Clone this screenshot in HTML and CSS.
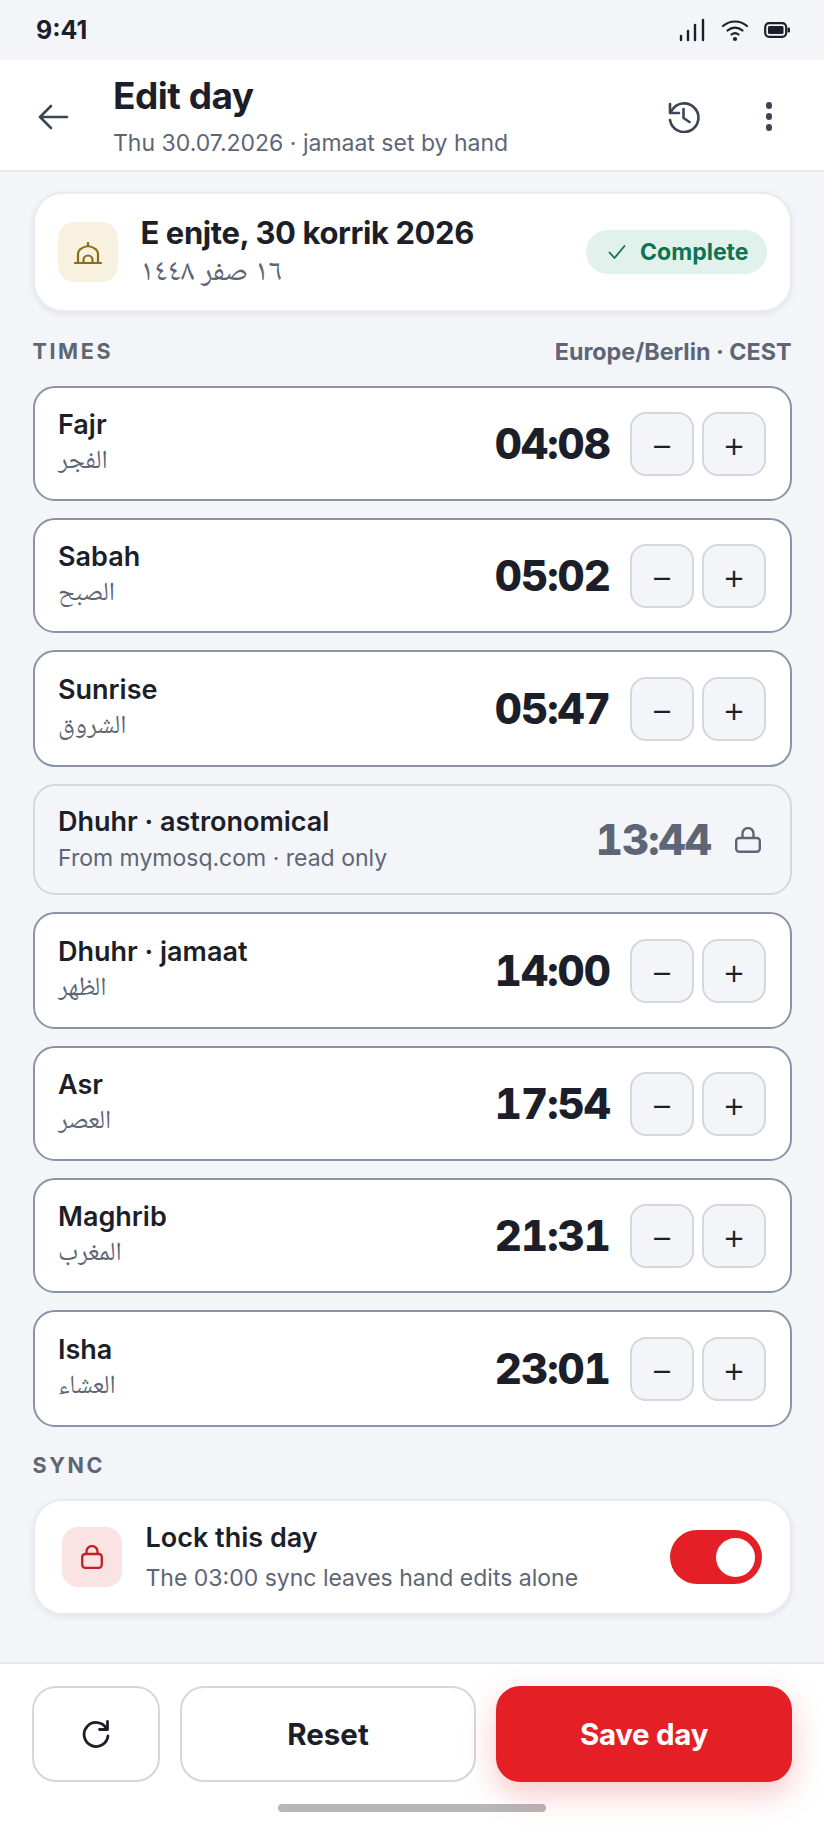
FILE: index.html
```html
<!DOCTYPE html>
<html lang="en">
<head>
    <meta charset="UTF-8">
    <meta name="viewport" content="width=device-width, initial-scale=1.0">
    <title>Edit day</title>
    <link rel="stylesheet" href="styles.css">
</head>
<body>
    <div class="screen">
        <div class="status-bar">
            <span class="status-time">9:41</span>
            <div class="status-icons">
                <svg width="27" height="24" viewBox="0 0 27 24"><path d="M2 22v-4M9 22v-9M16 22V7M24 22V2" fill="none" stroke="#1c1f2a" stroke-width="2.4" stroke-linecap="round"/></svg>
                <svg width="28" height="24" viewBox="0 0 28 24" fill="none" stroke="#1c1f2a" stroke-width="2.2" stroke-linecap="round"><path d="M2 8c7-6 17-6 24 0"/><path d="M6.5 12.5c4.500-3.800 10.500-3.800 15 0"/><path d="M10.500 16.500c2-1.600 5-1.600 7 0"/><circle cx="14" cy="21" r="1" fill="#1c1f2a"/></svg>
                <svg width="26" height="16" viewBox="0 0 26 16"><rect x="1.200" y="1.200" width="21" height="13.600" rx="4" fill="none" stroke="#1c1f2a" stroke-width="2.200"/><rect x="4" y="4" width="15.500" height="8" rx="1.500" fill="#1c1f2a"/><rect x="23.500" y="5.500" width="2.500" height="5" rx="1.200" fill="#1c1f2a"/></svg>
            </div>
        </div>

        <header class="topbar">
            <svg class="back-icon" width="32" height="26" viewBox="0 0 32 26" fill="none" stroke="#3d4453" stroke-width="2.600" stroke-linecap="round" stroke-linejoin="round"><path d="M30 13H3M14 2 3 13l11 11"/></svg>
            <div class="topbar-text">
                <h1>Edit day</h1>
                <p>Thu 30.07.2026 · jamaat set by hand</p>
            </div>
            <svg class="history-icon" width="33" height="33" viewBox="0 0 33 33" fill="none" stroke="#3d4453" stroke-width="2.600" stroke-linecap="round" stroke-linejoin="round"><path d="M2 4v9h9"/><path d="M3.500 11A14.300 14.300 0 1 1 2 20"/><path d="M15.500 9v9l6 4"/></svg>
            <div class="kebab"><i></i><i></i><i></i></div>
        </header>

        <main class="content">
            <section class="card date-card">
                <div class="icon-box icon-gold">
                    <svg width="28" height="22" viewBox="0 0 28 22" fill="none" stroke="#8a6d1c" stroke-width="2.200" stroke-linecap="round"><path d="M1 21h26"/><path d="M4 21v-9C4 7.500 9 5 14 4c5 1 10 3.500 10 8v9"/><path d="M9.500 21v-3a4.500 4.500 0 0 1 9 0v3"/><path d="M14 4V1"/></svg>
                </div>
                <div class="date-text">
                    <div class="date-title">E enjte, 30 korrik 2026</div>
                    <div class="date-hijri" dir="rtl">١٦ صفر ١٤٤٨</div>
                </div>
                <div class="badge">
                    <svg width="18" height="14" viewBox="0 0 18 14" fill="none" stroke="#0f7350" stroke-width="1.800" stroke-linecap="round" stroke-linejoin="round"><path d="M1.500 7.500 6.500 13 16.500 1"/></svg>
                    Complete
                </div>
            </section>

            <div class="section-head">
                <span class="section-label">TIMES</span>
                <span class="section-note">Europe/Berlin · CEST</span>
            </div>

            <div class="rows">
                <div class="row"><div class="row-text"><div class="row-name">Fajr</div><div class="row-ar" dir="rtl">الفجر</div></div><div class="row-time">04:08</div><button class="step">−</button><button class="step">+</button></div>
                <div class="row"><div class="row-text"><div class="row-name">Sabah</div><div class="row-ar" dir="rtl">الصبح</div></div><div class="row-time">05:02</div><button class="step">−</button><button class="step">+</button></div>
                <div class="row row-tall"><div class="row-text"><div class="row-name">Sunrise</div><div class="row-ar" dir="rtl">الشروق</div></div><div class="row-time">05:47</div><button class="step">−</button><button class="step">+</button></div>
                <div class="row row-locked">
                    <div class="row-text"><div class="row-name">Dhuhr · astronomical</div><div class="row-sub">From mymosq.com · read only</div></div>
                    <div class="row-time">13:44</div>
                    <svg class="row-lock" width="26" height="26" viewBox="0 0 26 26" fill="none" stroke="#5e6676" stroke-width="2.400" stroke-linejoin="round"><rect x="1.200" y="11" width="23.600" height="13.800" rx="3"/><path d="M7.500 11V6.500a5.500 5.500 0 0 1 11 0V11"/></svg>
                </div>
                <div class="row row-tall"><div class="row-text"><div class="row-name">Dhuhr · jamaat</div><div class="row-ar" dir="rtl">الظهر</div></div><div class="row-time">14:00</div><button class="step">−</button><button class="step">+</button></div>
                <div class="row"><div class="row-text"><div class="row-name">Asr</div><div class="row-ar" dir="rtl">العصر</div></div><div class="row-time">17:54</div><button class="step">−</button><button class="step">+</button></div>
                <div class="row"><div class="row-text"><div class="row-name">Maghrib</div><div class="row-ar" dir="rtl">المغرب</div></div><div class="row-time">21:31</div><button class="step">−</button><button class="step">+</button></div>
                <div class="row row-tall"><div class="row-text"><div class="row-name">Isha</div><div class="row-ar" dir="rtl">العشاء</div></div><div class="row-time">23:01</div><button class="step">−</button><button class="step">+</button></div>
            </div>

            <div class="section-head section-head-sync">
                <span class="section-label">SYNC</span>
            </div>

            <section class="card sync-card">
                <div class="icon-box icon-red">
                    <svg width="22" height="24" viewBox="0 0 22 24" fill="none" stroke="#c21f26" stroke-width="2.300" stroke-linejoin="round"><rect x="1.200" y="9" width="19.600" height="13.800" rx="3"/><path d="M5.500 9V6.500a5.500 5.500 0 0 1 11 0V9"/></svg>
                </div>
                <div class="sync-text">
                    <div class="sync-title">Lock this day</div>
                    <div class="sync-sub">The 03:00 sync leaves hand edits alone</div>
                </div>
                <div class="toggle"><span class="knob"></span></div>
            </section>
        </main>

        <footer class="actions">
            <div class="action-row">
                <button class="btn btn-icon">
                    <svg width="30" height="30" viewBox="0 0 30 30" fill="none" stroke="#1c1f2a" stroke-width="2.800" stroke-linecap="round" stroke-linejoin="round"><path d="M25.500 9.500A12 12 0 1 0 27 17"/><path d="M26.500 2.500v8h-8"/></svg>
                </button>
                <button class="btn btn-reset">Reset</button>
                <button class="btn btn-save">Save day</button>
            </div>
            <div class="home-bar"></div>
        </footer>
    </div>
</body>
</html>
```

FILE: styles.css
```css
* {
    box-sizing: border-box;
}
html, body {
    margin: 0;
    padding: 0;
}
body {
    font-family: Inter, sans-serif;
    background-color: #f3f5f9;
    color: #1c1f2a;
}
.screen {
    width: 824px;
    height: 1830px;
    display: flex;
    flex-direction: column;
    overflow: hidden;
}
.status-bar {
    height: 60px;
    padding: 0 34px 0 36px;
    display: flex;
    align-items: center;
    justify-content: space-between;
}
.status-time {
    font-size: 25px;
    font-weight: 700;
}
.status-icons {
    display: flex;
    align-items: center;
    gap: 15px;
}
.topbar {
    height: 112px;
    background-color: white;
    border-bottom: 2px solid #e5e7eb;
    display: flex;
    align-items: center;
    padding: 0 52px 0 37px;
}
.back-icon {
    flex: none;
    margin-top: 3px;
}
.topbar-text {
    flex: 1;
    margin: 1px 0 0 44px;
}
.topbar-text h1 {
    margin: 0;
    font-size: 37px;
    line-height: 44px;
    font-weight: 700;
    letter-spacing: -0.5px;
}
.topbar-text p {
    margin: 10px 0 0;
    font-size: 23px;
    line-height: 30px;
    color: #5e6676;
}
.history-icon {
    flex: none;
    margin: 3px 65px 0 0;
}
.kebab {
    display: flex;
    flex-direction: column;
    gap: 4.300px;
    margin-top: 3px;
}
.kebab i {
    width: 6.500px;
    height: 6.500px;
    border-radius: 50%;
    background-color: #3d4453;
}
.content {
    flex: 1;
    padding: 20px 32.500px 0;
}
.card {
    background-color: white;
    border: 2px solid #e9ebf0;
    border-radius: 30px;
    box-shadow: 0 2px 6px rgba(28, 31, 42, 0.08);
    display: flex;
    align-items: center;
}
.date-card {
    height: 120px;
    padding: 0 23px;
}
.icon-box {
    width: 60px;
    height: 60px;
    border-radius: 16px;
    flex: none;
    display: flex;
    align-items: center;
    justify-content: center;
}
.icon-gold {
    background-color: #f8f1df;
}
.icon-gold svg {
    margin-top: 2px;
}
.icon-red {
    background-color: #fbe2e3;
}
.date-text {
    flex: 1;
    margin-left: 23px;
}
.date-title {
    font-size: 31px;
    line-height: 38px;
    font-weight: 700;
    letter-spacing: -0.4px;
}
.date-hijri {
    width: fit-content;
    font-family: "Noto Naskh Arabic", "Noto Serif Arabic", Amiri, "DejaVu Serif", "Liberation Serif", FreeSerif, serif;
    font-size: 30px;
    line-height: 32px;
    margin-top: 6px;
    color: #5e6676;
}
.badge {
    height: 44px;
    padding: 0 18px 0 22px;
    border-radius: 22px;
    background-color: #e1f2ec;
    color: #0f7350;
    font-size: 23px;
    font-weight: 700;
    display: flex;
    align-items: center;
    gap: 14px;
}
.section-head {
    display: flex;
    justify-content: space-between;
    align-items: center;
    margin: 26px 0 22px;
    height: 26px;
}
.section-head-sync {
    margin: 25px 0 21px;
}
.section-label {
    font-size: 21.500px;
    font-weight: 700;
    letter-spacing: 2.600px;
    color: #5e6676;
}
.section-note {
    font-size: 23.300px;
    font-weight: 700;
    color: #5e6676;
}
.rows {
    display: flex;
    flex-direction: column;
    gap: 17px;
}
.row {
    background-color: white;
    border: 2px solid #8a93a8;
    border-radius: 22px;
    height: 115px;
    padding: 0 23.500px;
    display: flex;
    align-items: center;
}
.row-tall {
    height: 117px;
}
.row-locked {
    height: 111px;
    background-color: #f3f5f9;
    border-color: #d5d7dc;
}
.row-text {
    flex: 1;
    padding-top: 2px;
}
.row-name {
    font-size: 27px;
    line-height: 34px;
    font-weight: 600;
    margin-top: -2px;
}
.row-ar {
    width: fit-content;
    font-family: "Noto Naskh Arabic", "Noto Serif Arabic", Amiri, "DejaVu Serif", "Liberation Serif", FreeSerif, serif;
    font-size: 26px;
    line-height: 36px;
    margin-top: 2px;
    color: #5e6676;
}
.row-sub {
    font-size: 23px;
    line-height: 32px;
    margin-top: 3px;
    color: #5e6676;
}
.row-time {
    font-size: 42px;
    font-weight: 800;
    letter-spacing: -0.900px;
    font-variant-numeric: tabular-nums;
    margin-right: 20px;
}
.row-locked .row-time {
    color: #5e6676;
}
.row-lock {
    margin: 0 5px 0 4px;
}
.step {
    width: 64px;
    height: 64px;
    border: 2px solid #d5d7dc;
    border-radius: 16px;
    background-color: #f3f5f9;
    color: #1c1f2a;
    font-family: Inter, sans-serif;
    font-size: 36px;
    font-weight: 300;
    padding: 0;
    margin-left: 8px;
}
.row-time + .step {
    margin-left: 0;
}
.sync-card {
    height: 116px;
    padding: 0 28px 0 27px;
}
.sync-text {
    flex: 1;
    margin-left: 24px;
}
.sync-title {
    font-size: 27px;
    line-height: 34px;
    font-weight: 600;
}
.sync-sub {
    font-size: 23px;
    line-height: 32px;
    margin-top: 7px;
    color: #5e6676;
}
.toggle {
    width: 92px;
    height: 54px;
    border-radius: 27px;
    background-color: #e41f26;
    display: flex;
    align-items: center;
    justify-content: flex-end;
    padding-right: 7px;
}
.knob {
    width: 39px;
    height: 39px;
    border-radius: 50%;
    background-color: white;
}
.actions {
    height: 168px;
    background-color: white;
    border-top: 2px solid #e5e7eb;
    padding: 22px 32px 0;
}
.action-row {
    display: flex;
    gap: 20px;
}
.btn {
    height: 96px;
    border-radius: 24px;
    font-family: Inter, sans-serif;
    font-size: 29.500px;
    font-weight: 700;
    padding: 0;
}
.btn-icon, .btn-reset {
    background-color: white;
    border: 2px solid #d5d7dc;
    color: #1c1f2a;
}
.btn-icon {
    width: 128px;
    display: flex;
    align-items: center;
    justify-content: center;
}
.btn-reset {
    width: 296px;
}
.btn-save {
    flex: 1;
    background-color: #e41f26;
    border: none;
    color: white;
    letter-spacing: -0.300px;
    box-shadow: 0 12px 32px rgba(228, 31, 38, 0.25);
}
.home-bar {
    width: 268px;
    height: 8px;
    margin: 22px auto 0;
    border-radius: 4px;
    background-color: #b7b7ba;
}
```
